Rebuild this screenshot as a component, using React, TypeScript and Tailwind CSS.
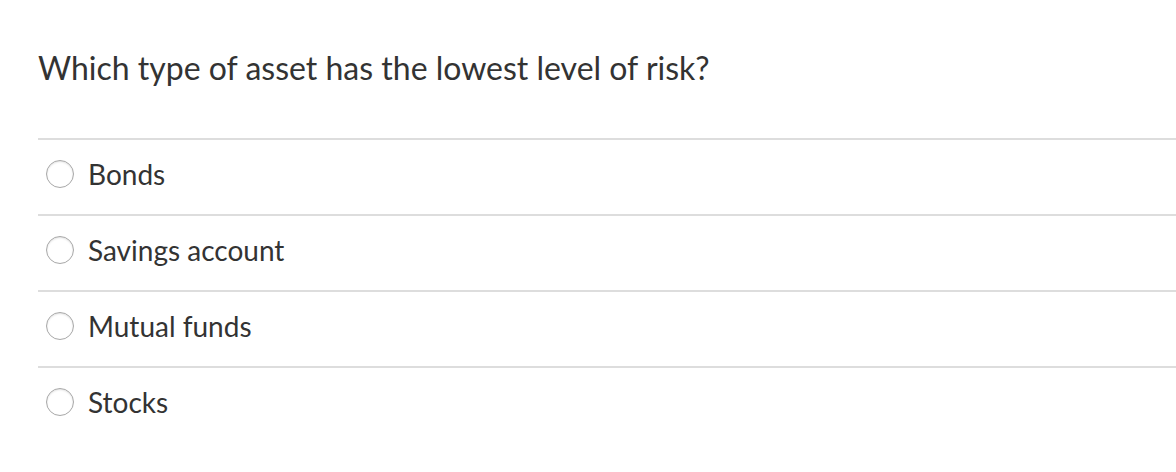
import React from "react";

const options = ["Bonds", "Savings account", "Mutual funds", "Stocks"];

function Radio() {
  return (
    <span className="block w-[28px] h-[28px] rounded-full border border-[#a8a8a8] bg-white shadow-[inset_0_1px_2px_rgba(0,0,0,0.12)] shrink-0" />
  );
}

export default function App() {
  return (
    <div className="w-[1176px] h-[472px] bg-white pl-[38px] pt-[48px] font-['Lato','Liberation_Sans',sans-serif]">
      <h1 className="text-[32px] leading-[40px] text-[#333] m-0">
        Which type of asset has the lowest level of risk?
      </h1>
      <div className="mt-[50px]">
        {options.map((o) => (
          <div
            key={o}
            className="flex items-center h-[76px] border-t-2 border-[#dddddd] pb-[6px] pl-[8px]"
          >
            <Radio />
            <span className="ml-[14px] text-[28px] leading-[34px] text-[#333]">{o}</span>
          </div>
        ))}
      </div>
    </div>
  );
}
